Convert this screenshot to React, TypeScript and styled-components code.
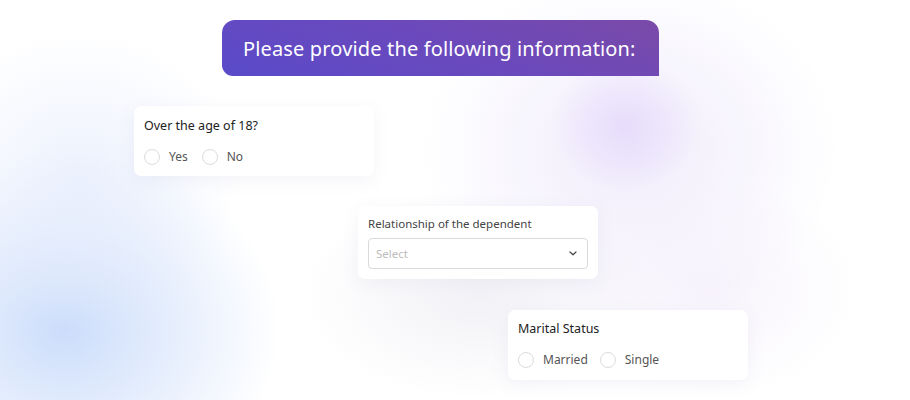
import React from "react";
import styled, { createGlobalStyle } from "styled-components";

const Global = createGlobalStyle`
  html, body { margin: 0; padding: 0; }
  body { font-family: "Noto Sans", "Liberation Sans", sans-serif; }
`;

const Stage = styled.div`
  position: relative;
  width: 910px;
  height: 400px;
  overflow: hidden;
  background: #ffffff;
`;

const Blob = styled.div<{ $x: number; $y: number; $w: number; $h: number; $c: string }>`
  position: absolute;
  left: ${(p) => p.$x}px;
  top: ${(p) => p.$y}px;
  width: ${(p) => p.$w}px;
  height: ${(p) => p.$h}px;
  border-radius: 50%;
  background: radial-gradient(closest-side, ${(p) => p.$c}, rgba(255, 255, 255, 0));
  pointer-events: none;
`;

const Content = styled.div`
  position: relative;
  display: flex;
  flex-direction: column;
  padding-top: 20px;
`;

const Bubble = styled.div`
  margin-left: 222px;
  width: 437px;
  height: 56px;
  box-sizing: border-box;
  border-radius: 13px 13px 0 11px;
  background: linear-gradient(20deg, #5a4bc9 0%, #6a49bd 50%, #7a4aa8 100%);
  color: #ffffff;
  font-size: 20px;
  display: flex;
  align-items: center;
  padding-left: 21px;
  letter-spacing: 0.15px;
`;

const Card = styled.div<{ $left: number; $top: number; $h: number }>`
  margin-left: ${(p) => p.$left}px;
  margin-top: ${(p) => p.$top}px;
  width: 240px;
  height: ${(p) => p.$h}px;
  box-sizing: border-box;
  background: #ffffff;
  border-radius: 7px;
  padding: 0 10px;
  display: flex;
  flex-direction: column;
  box-shadow: 0 4px 18px rgba(120, 120, 160, 0.08);
`;

const Title = styled.div<{ $pt: number; $size: number; $color: string }>`
  padding-top: ${(p) => p.$pt}px;
  font-size: ${(p) => p.$size}px;
  line-height: 16px;
  color: ${(p) => p.$color};
`;

const RadioRow = styled.div`
  display: flex;
  align-items: center;
  margin-top: 14px;
`;

const RadioItem = styled.label<{ $gap: number }>`
  display: flex;
  align-items: center;
  margin-right: ${(p) => p.$gap}px;
  font-size: 12px;
  color: #555;
`;

const Circle = styled.span`
  width: 16px;
  height: 16px;
  box-sizing: border-box;
  border: 1px solid #dcdcdc;
  border-radius: 50%;
  margin-right: 9px;
  background: #fff;
`;

const SelectBox = styled.div`
  margin-top: 6px;
  height: 31px;
  box-sizing: border-box;
  border: 1px solid #d9d9d9;
  border-radius: 4px;
  display: flex;
  align-items: center;
  justify-content: space-between;
  padding: 0 10px 0 7px;
  font-size: 11.5px;
  color: #bcbcbc;
`;

function Radio({ label, gap }: { label: string; gap: number }) {
  return (
    <RadioItem $gap={gap}>
      <Circle />
      {label}
    </RadioItem>
  );
}

export default function App() {
  return (
    <>
      <Global />
      <Stage>
        <Blob $x={-150} $y={150} $w={430} $h={360} $c="rgba(195, 215, 250, 0.85)" />
        <Blob $x={-80} $y={30} $w={320} $h={300} $c="rgba(228, 235, 252, 0.7)" />
        <Blob $x={420} $y={-30} $w={420} $h={360} $c="rgba(236, 230, 250, 0.8)" />
        <Blob $x={550} $y={60} $w={150} $h={130} $c="rgba(228, 216, 252, 0.8)" />
        <Blob $x={560} $y={180} $w={300} $h={220} $c="rgba(244, 238, 250, 0.7)" />
        <Blob $x={300} $y={190} $w={360} $h={210} $c="rgba(238, 238, 244, 0.8)" />
        <Content>
          <Bubble>Please provide the following information:</Bubble>
          <Card $left={134} $top={30} $h={70}>
            <Title $pt={12} $size={12.5} $color="#222">Over the age of 18?</Title>
            <RadioRow>
              <Radio label="Yes" gap={14} />
              <Radio label="No" gap={14} />
            </RadioRow>
          </Card>
          <Card $left={358} $top={30} $h={73}>
            <Title $pt={10} $size={11.5} $color="#444">Relationship of the dependent</Title>
            <SelectBox>
              <span>Select</span>
              <svg width="8" height="5" viewBox="0 0 8 5" fill="none">
                <path d="M1 1l3 2.8L7 1" stroke="#444" strokeWidth="1.2" strokeLinecap="round" strokeLinejoin="round" />
              </svg>
            </SelectBox>
          </Card>
          <Card $left={508} $top={31} $h={70}>
            <Title $pt={11} $size={12.5} $color="#222">Marital Status</Title>
            <RadioRow>
              <Radio label="Married" gap={12} />
              <Radio label="Single" gap={12} />
            </RadioRow>
          </Card>
        </Content>
      </Stage>
    </>
  );
}
